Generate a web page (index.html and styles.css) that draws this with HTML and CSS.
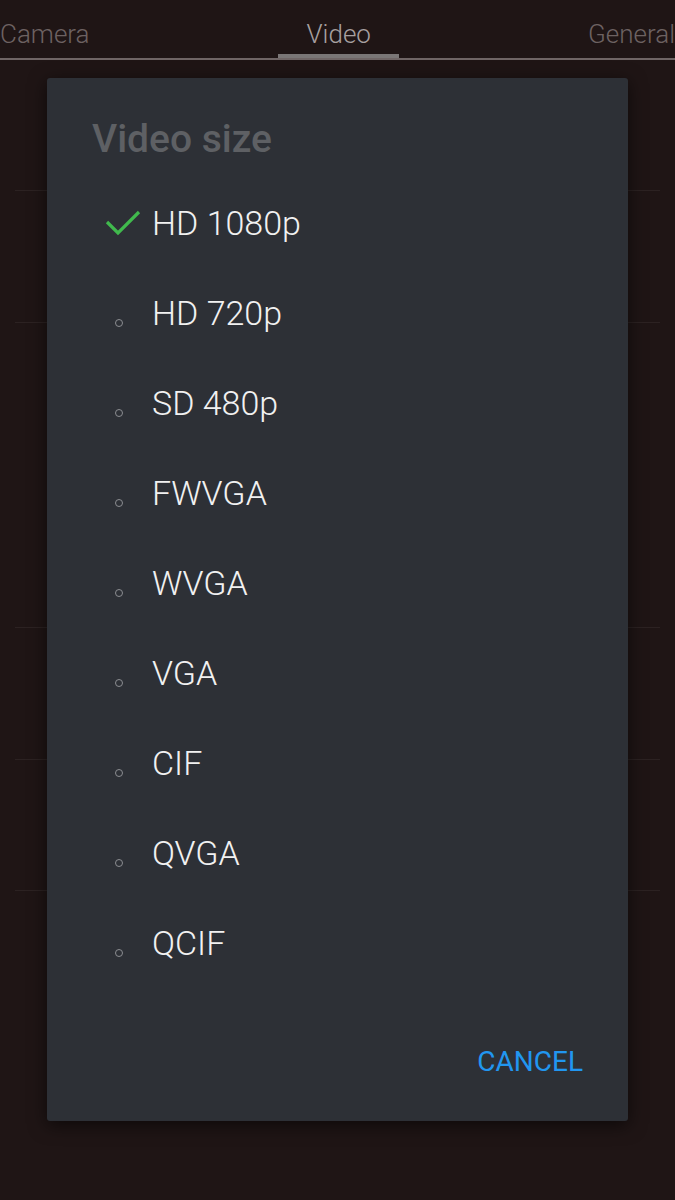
FILE: index.html
```html
<!DOCTYPE html>
<html lang="en">
<head>
  <meta charset="UTF-8">
  <meta name="viewport" content="width=device-width, initial-scale=1.0">
  <title>Video settings</title>
  <link rel="stylesheet" href="styles.css">
</head>
<body>

  <!-- Tabs -->
  <div class="tabs">
    <div class="tab tab-left">Camera</div>
    <div class="tab active">Video</div>
    <div class="tab tab-right">General</div>
  </div>

  <!-- Settings list behind the dialog (hidden by it) -->
  <div class="settings">
    <div class="row"></div>
    <div class="row row-tall"></div>
    <div class="row"></div>
    <div class="row"></div>
  </div>

  <!-- Dialog -->
  <div class="overlay">
    <div class="dialog">
      <h2 class="dialog-title">Video size</h2>
      <ul class="options">
        <li class="option selected">
          <span class="mark">
            <svg width="36" height="26" viewBox="0 0 36 26">
              <path d="M2 12 L13 23 L34 2" fill="none" stroke="#40b94d" stroke-width="3.2"/>
            </svg>
          </span>
          HD 1080p
        </li>
        <li class="option"><span class="mark"><span class="dot"></span></span>HD 720p</li>
        <li class="option"><span class="mark"><span class="dot"></span></span>SD 480p</li>
        <li class="option"><span class="mark"><span class="dot"></span></span>FWVGA</li>
        <li class="option"><span class="mark"><span class="dot"></span></span>WVGA</li>
        <li class="option"><span class="mark"><span class="dot"></span></span>VGA</li>
        <li class="option"><span class="mark"><span class="dot"></span></span>CIF</li>
        <li class="option"><span class="mark"><span class="dot"></span></span>QVGA</li>
        <li class="option"><span class="mark"><span class="dot"></span></span>QCIF</li>
      </ul>
      <div class="dialog-footer">
        <button class="button">CANCEL</button>
      </div>
    </div>
  </div>

</body>
</html>
```

FILE: styles.css
```css
* {
  margin: 0;
  padding: 0;
  box-sizing: border-box;
  font-family: 'Roboto', 'Liberation Sans', sans-serif;
}

body {
  background-color: #1f1515;
  width: 675px;
  height: 1200px;
  overflow: hidden;
  position: relative;
}

/* Tabs */
.tabs {
  display: flex;
  justify-content: space-between;
  height: 60px;
  border-bottom: 2px solid #6f6565;
}

.tab {
  font-size: 26px;
  font-weight: 300;
  color: #6d6262;
  line-height: 68px;
  height: 58px;
  width: 121px;
  text-align: center;
}

.tab-left {
  text-align: left;
  width: auto;
}

.tab-right {
  text-align: right;
  width: auto;
}

.tab.active {
  color: #a7a0a0;
  border-bottom: 4px solid #7a7676;
}

/* Background settings list */
.settings {
  padding: 0 15px;
  margin-top: 130px;
}

.row {
  height: 132px;
  border-top: 1px solid #2c2222;
}

.row:last-child {
  border-bottom: 1px solid #2c2222;
}

.row-tall {
  height: 305px;
}

/* Dialog */
.overlay {
  position: absolute;
  top: 78px;
  left: 47px;
}

.dialog {
  width: 581px;
  height: 1043px;
  background-color: #2d3036;
  border-radius: 3px;
  box-shadow: 0 4px 18px rgba(0, 0, 0, 0.6);
  display: flex;
  flex-direction: column;
}

.dialog-title {
  font-size: 39px;
  font-weight: 500;
  color: #5e6064;
  padding: 41px 45px 0;
  line-height: 40px;
  margin-bottom: 19px;
}

.options {
  list-style: none;
  padding-left: 45px;
}

.option {
  display: flex;
  align-items: center;
  height: 90px;
  font-size: 34px;
  color: #f1f1f1;
  font-weight: 300;
}

.mark {
  width: 60px;
  height: 90px;
  display: flex;
  align-items: center;
  padding-left: 13px;
}

.dot {
  width: 8px;
  height: 8px;
  border: 1.5px solid #8c8e92;
  border-radius: 50%;
  margin: 20px 0 0 10px;
}

.dialog-footer {
  display: flex;
  justify-content: flex-end;
  padding: 54px 45px 0;
}

.button {
  background: none;
  border: none;
  color: #2196f0;
  font-size: 28px;
  font-weight: 400;
  line-height: 40px;
}
```
